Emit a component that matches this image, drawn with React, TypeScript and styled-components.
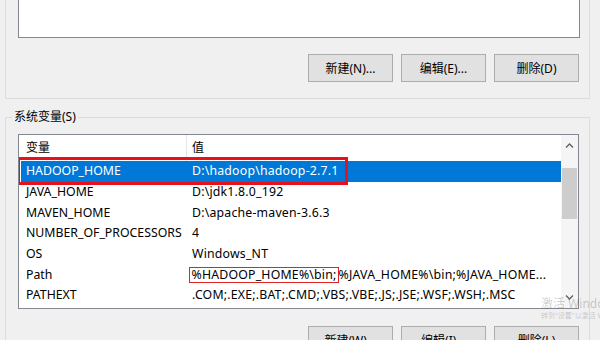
import React from 'react'
import styled, { createGlobalStyle } from 'styled-components'

const GlobalStyle = createGlobalStyle`
  html, body {
    margin: 0;
    padding: 0;
    background: #f0f0f0;
    overflow: hidden;
  }
  body {
    font-family: "Noto Sans", "Noto Sans CJK SC", sans-serif;
    font-size: 12px;
    color: #000;
  }
`

const Page = styled.div`
  position: relative;
  width: 600px;
  height: 340px;
  overflow: hidden;
  padding-left: 5px;
  box-sizing: border-box;
`

const Group = styled.div<{ $cutTop?: boolean }>`
  width: 585px;
  box-sizing: border-box;
  border: 1px solid #dcdcdc;
  border-top: ${(p) => (p.$cutTop ? 'none' : '1px solid #dcdcdc')};
  border-bottom: ${(p) => (p.$cutTop ? '1px solid #dcdcdc' : 'none')};
  padding: ${(p) => (p.$cutTop ? '0 9px 16px 12px' : '0 10px 40px 12px')};
  margin-top: ${(p) => (p.$cutTop ? '0' : '18px')};
`

const Legend = styled.div`
  width: fit-content;
  margin: -9px 0 0 -6px;
  padding: 0 2px;
  line-height: 16px;
  background: #f0f0f0;
  color: #000;
`

const EmptyList = styled.div`
  height: 38px;
  box-sizing: border-box;
  background: #fff;
  border: 1px solid #828790;
  border-top: none;
`

const ButtonRow = styled.div<{ $top: number; $right?: number }>`
  display: flex;
  justify-content: flex-end;
  gap: 8px;
  margin-top: ${(p) => p.$top}px;
  padding-right: ${(p) => p.$right ?? 0}px;
`

const Button = styled.button`
  width: 85px;
  height: 28px;
  box-sizing: border-box;
  padding: 0;
  background: #e1e1e1;
  border: 1px solid #adadad;
  font-family: "Noto Sans", "Noto Sans CJK SC", sans-serif;
  font-size: 12px;
  color: #000;
`

const VarList = styled.div`
  display: flex;
  margin-top: 9px;
  width: 561px;
  height: 175px;
  box-sizing: border-box;
  background: #fff;
  border: 1px solid #828790;
`

const Table = styled.div`
  flex: 1;
  display: flex;
  flex-direction: column;
  overflow: hidden;
`

const Header = styled.div`
  display: grid;
  grid-template-columns: 167px 1fr;
  height: 26px;
  flex: none;
  align-items: stretch;
`

const HeaderCell = styled.div<{ $divider?: boolean }>`
  display: flex;
  align-items: center;
  padding-left: ${(p) => (p.$divider ? 5 : 7)}px;
  padding-bottom: 2px;
  border-left: ${(p) => (p.$divider ? '1px solid #e5e5e5' : 'none')};
`

const Row = styled.div<{ $selected?: boolean }>`
  position: relative;
  display: grid;
  grid-template-columns: 165px 1fr;
  align-items: center;
  height: 20.7px;
  flex: none;
  margin-left: 2px;
  background: ${(p) => (p.$selected ? '#0078d7' : 'transparent')};
  color: ${(p) => (p.$selected ? '#fff' : '#000')};
`

const Cell = styled.div<{ $value?: boolean }>`
  padding-left: ${(p) => (p.$value ? 6 : 5)}px;
  white-space: nowrap;
  overflow: hidden;
  font-size: 12.3px;
  letter-spacing: ${(p) => (p.$value ? 0.2 : 0)}px;
  line-height: 16px;
`

const RowMark = styled.span`
  position: absolute;
  left: -4px;
  top: -4px;
  width: 331px;
  height: 28px;
  box-sizing: border-box;
  border: 3px solid #e8101a;
  pointer-events: none;
`

const InlineMark = styled.span`
  display: inline-block;
  margin-left: -3px;
  padding: 0 1px 0 1.5px;
  line-height: 14px;
  border: 1.5px solid #e02424;
`

const Scrollbar = styled.div`
  width: 17px;
  flex: none;
  display: flex;
  flex-direction: column;
  background: #f5f5f5;
`

const ArrowBox = styled.div`
  height: 22px;
  display: flex;
  align-items: center;
  justify-content: center;
  flex: none;
`

const Track = styled.div`
  flex: 1;
  padding-top: 11px;
`

const Thumb = styled.div`
  width: 15px;
  height: 51px;
  margin-left: 1px;
  background: #cdcdcd;
`

const Watermark = styled.div`
  position: absolute;
  left: 541px;
  top: 296px;
  white-space: nowrap;
  color: rgba(0, 0, 0, 0.2);
  pointer-events: none;
`

const WatermarkTitle = styled.div`
  font-size: 12px;
  line-height: 15px;
`

const WatermarkHint = styled.div`
  font-size: 7px;
  line-height: 10px;
`

const Chevron = ({ down }: { down?: boolean }) => (
  <svg width='9' height='6' viewBox='0 0 9 6'>
    <path
      d={down ? 'M1 1.5 L4.5 5 L8 1.5' : 'M1 4.5 L4.5 1 L8 4.5'}
      fill='none'
      stroke='#606060'
      strokeWidth='1.3'
    />
  </svg>
)

const vars: { name: string; value: React.ReactNode }[] = [
  { name: 'JAVA_HOME', value: 'D:\\jdk1.8.0_192' },
  { name: 'MAVEN_HOME', value: 'D:\\apache-maven-3.6.3' },
  { name: 'NUMBER_OF_PROCESSORS', value: '4' },
  { name: 'OS', value: 'Windows_NT' },
  {
    name: 'Path',
    value: (
      <>
        <InlineMark>%HADOOP_HOME%\bin;</InlineMark>%JAVA_HOME%\bin;%JAVA_HOME...
      </>
    ),
  },
  { name: 'PATHEXT', value: '.COM;.EXE;.BAT;.CMD;.VBS;.VBE;.JS;.JSE;.WSF;.WSH;.MSC' },
]

export default function App() {
  return (
    <Page>
      <GlobalStyle />
      <Group $cutTop>
        <EmptyList />
        <ButtonRow $top={16} $right={1}>
          <Button>新建(N)...</Button>
          <Button>编辑(E)...</Button>
          <Button>删除(D)</Button>
        </ButtonRow>
      </Group>

      <Group>
        <Legend>系统变量(S)</Legend>
        <VarList>
          <Table>
            <Header>
              <HeaderCell>变量</HeaderCell>
              <HeaderCell $divider>值</HeaderCell>
            </Header>
            <Row $selected>
              <RowMark />
              <Cell>HADOOP_HOME</Cell>
              <Cell $value>D:\hadoop\hadoop-2.7.1</Cell>
            </Row>
            {vars.map((v) => (
              <Row key={v.name}>
                <Cell>{v.name}</Cell>
                <Cell $value>{v.value}</Cell>
              </Row>
            ))}
          </Table>
          <Scrollbar>
            <ArrowBox>
              <Chevron />
            </ArrowBox>
            <Track>
              <Thumb />
            </Track>
            <ArrowBox>
              <Chevron down />
            </ArrowBox>
          </Scrollbar>
        </VarList>
        <ButtonRow $top={17}>
          <Button>新建(W)...</Button>
          <Button>编辑(I)...</Button>
          <Button>删除(L)</Button>
        </ButtonRow>
      </Group>

      <Watermark>
        <WatermarkTitle>激活 Windows</WatermarkTitle>
        <WatermarkHint>转到"设置"以激活 Windows。</WatermarkHint>
      </Watermark>
    </Page>
  )
}
